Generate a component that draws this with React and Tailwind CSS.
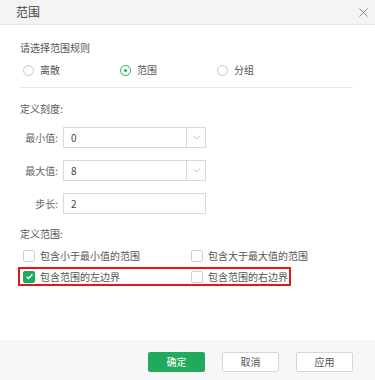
import React from "react";

function Radio({ checked, label }) {
  return (
    <div className="flex items-center w-[97px]">
      <span
        className={
          "w-[11px] h-[11px] rounded-full border flex items-center justify-center " +
          (checked ? "border-[#1aad5b]" : "border-[#c8c8c8]")
        }
      >
        {checked && <span className="w-[3px] h-[3px] rounded-full bg-[#1aad5b]" />}
      </span>
      <span className="ml-[6px]">{label}</span>
    </div>
  );
}

function Check({ checked, label }) {
  return (
    <div className="flex items-center w-[168px] shrink-0">
      {checked ? (
        <span className="w-[12px] h-[12px] rounded-[2px] bg-[#1aad5b] flex items-center justify-center">
          <svg width="9" height="9" viewBox="0 0 10 10">
            <path d="M1.8 5.2 L4 7.3 L8.3 2.6" fill="none" stroke="white" strokeWidth="1.6" />
          </svg>
        </span>
      ) : (
        <span className="w-[12px] h-[12px] rounded-[2px] border border-[#cfcfcf] bg-white" />
      )}
      <span className="ml-[5px]">{label}</span>
    </div>
  );
}

function Field({ label, value, select }) {
  return (
    <div className="flex items-center h-[21px]">
      <div className="w-[43px] text-right pr-[5px] text-[#666]">{label}</div>
      <div className="flex h-[21px] w-[143px] border border-[#d9d9d9] bg-white">
        <div className="flex-1 flex items-center pl-[7px] text-[#444]">{value}</div>
        {select && (
          <div className="w-[19px] border-l border-[#d9d9d9] flex items-center justify-center">
            <svg width="7" height="5" viewBox="0 0 7 5">
              <path d="M0.5 1 L3.5 4 L6.5 1" fill="none" stroke="#b5b5b5" strokeWidth="0.9" />
            </svg>
          </div>
        )}
      </div>
    </div>
  );
}

export default function App() {
  return (
    <div
      className="w-[375px] h-[380px] bg-white flex flex-col text-[10px] leading-[14px] text-[#555]"
      style={{ fontFamily: '"Noto Sans CJK SC", "Noto Sans", sans-serif' }}
    >
      <div className="h-[25px] bg-[#f4f4f4] border-b border-[#e6e6e6] flex items-center justify-between pl-[16px] pr-[7px]">
        <span className="text-[12px] text-[#444]">范围</span>
        <svg width="9" height="9" viewBox="0 0 9 9">
          <path d="M0.5 0.5 L8.5 8.5 M8.5 0.5 L0.5 8.5" stroke="#888" strokeWidth="1" />
        </svg>
      </div>
      <div className="flex-1 flex flex-col pl-[20px] pt-[16px]">
        <div>请选择范围规则</div>
        <div className="flex mt-[8px] pl-[3px]">
          <Radio label="离散" />
          <Radio label="范围" checked />
          <Radio label="分组" />
        </div>
        <div className="mt-[10px] w-[333px] h-px bg-[#e8e8e8]" />
        <div className="mt-[14px]">定义刻度:</div>
        <div className="mt-[11px] flex flex-col gap-[12px]">
          <Field label="最小值:" value="0" select />
          <Field label="最大值:" value="8" select />
          <Field label="步长:" value="2" />
        </div>
        <div className="mt-[13px]">定义范围:</div>
        <div className="mt-[8px] flex pl-[3px]">
          <Check label="包含小于最小值的范围" />
          <Check label="包含大于最大值的范围" />
        </div>
        <div className="mt-[4px] ml-[-2px] w-[273px] h-[19px] border-2 border-[#e8151b] flex items-center pl-[3px]">
          <Check label="包含范围的左边界" checked />
          <Check label="包含范围的右边界" />
        </div>
      </div>
      <div className="h-[40px] bg-[#f7f7f7] flex items-start justify-end pt-[12px] pr-[22px] gap-[17px]">
        <button className="w-[57px] h-[20px] bg-[#21aa5c] text-white rounded-[2px] text-[10px]">确定</button>
        <button className="w-[57px] h-[20px] bg-white border border-[#d6d6d6] rounded-[2px] text-[10px] text-[#555]">取消</button>
        <button className="w-[57px] h-[20px] bg-white border border-[#d6d6d6] rounded-[2px] text-[10px] text-[#555]">应用</button>
      </div>
    </div>
  );
}
